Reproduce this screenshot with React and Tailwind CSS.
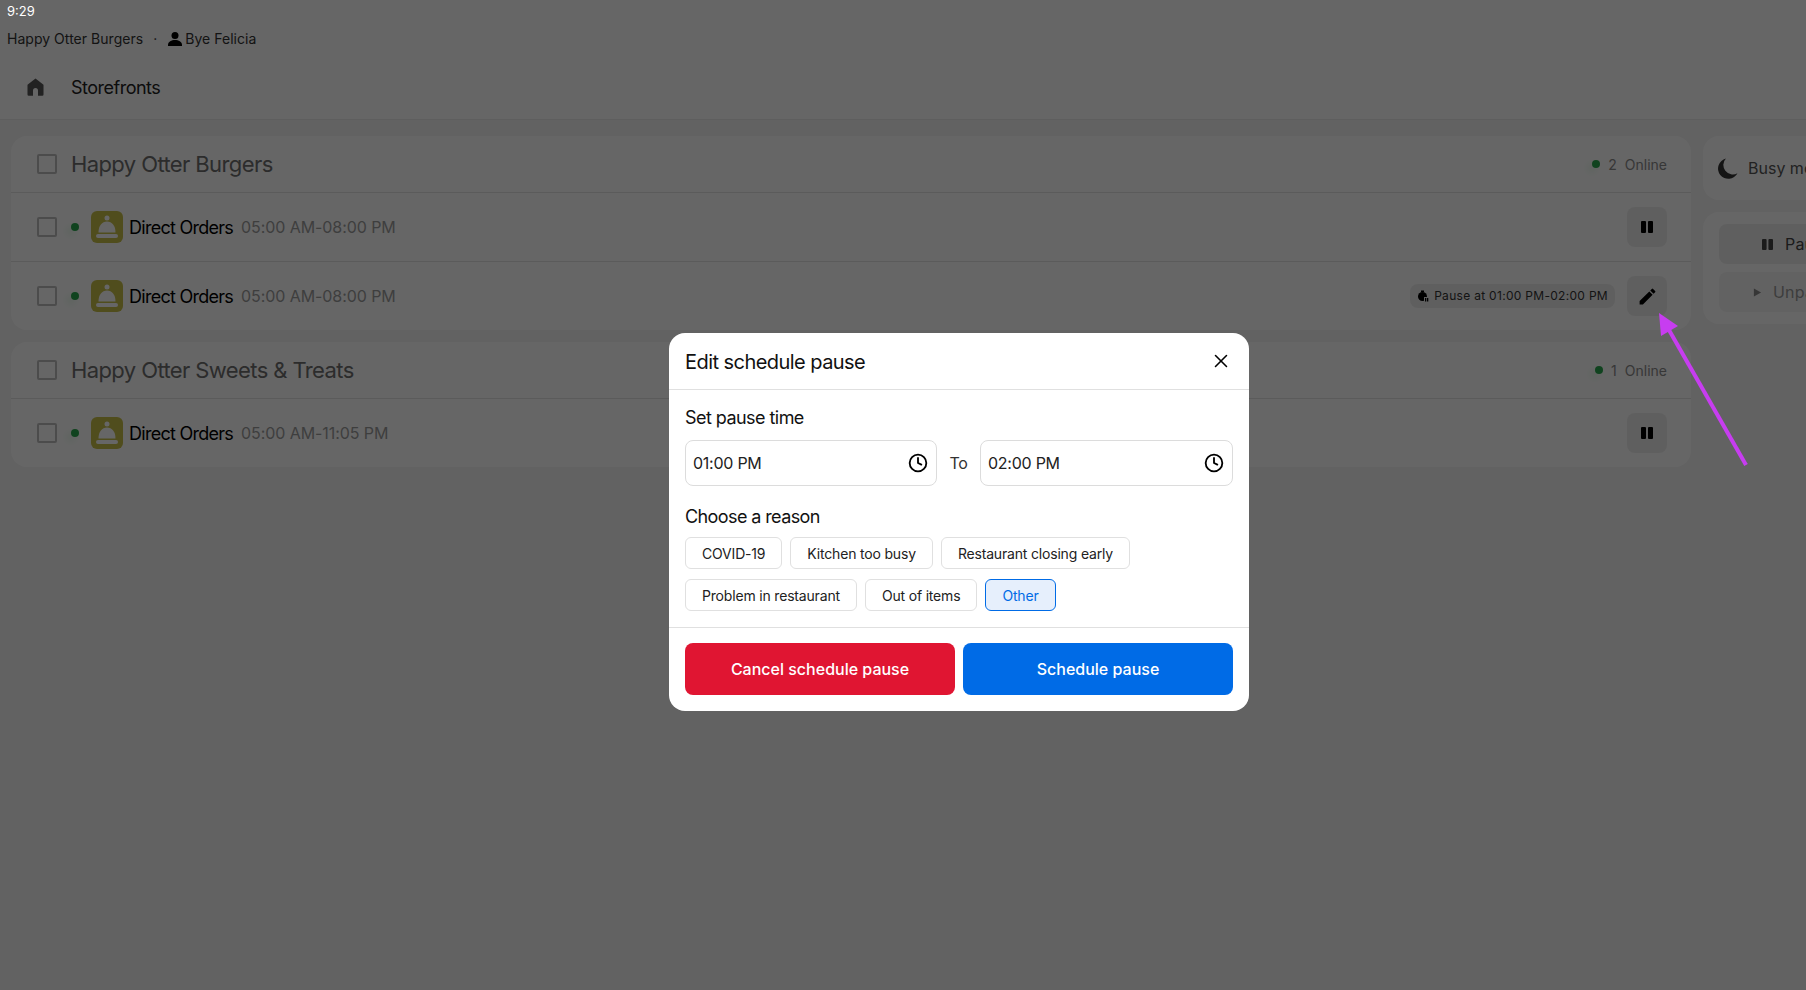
import React from "react";
import { X, Clock } from "lucide-react";

function Check() {
  return <span className="block size-5 shrink-0 rounded-[2px] border-2 border-[#bdbdbd] bg-white" />;
}

function Bell() {
  return (
    <span className="flex size-8 shrink-0 items-center justify-center rounded-md bg-[#c8c04a]">
      <svg viewBox="0 0 32 32" className="size-8">
        <circle cx="16" cy="7" r="2.500" fill="#fff" />
        <path d="M7.500 21.500C7.500 14.500 11 10.500 16 10.500s8.500 4 8.500 11z" fill="#fff" />
        <rect x="5" y="23" width="22" height="4" rx="2" fill="#fff" />
      </svg>
    </span>
  );
}

function Dot() {
  return <span className="block size-2 shrink-0 rounded-full bg-[#2aa84e] shadow-[-4px_4px_6px_rgba(47,200,92,0.12)]" />;
}

function PauseIcon({ className }) {
  return (
    <svg viewBox="0 0 12 12" className={className} fill="currentColor">
      <rect x="0" y="0" width="5" height="12" rx="1" />
      <rect x="7" y="0" width="5" height="12" rx="1" />
    </svg>
  );
}

function SquareBtn({ children }) {
  return (
    <span className="flex size-10 items-center justify-center rounded-lg bg-[#eeeeee] text-black">{children}</span>
  );
}

function Row({ time, children, border }) {
  return (
    <div className={`flex items-center pl-[26px] pr-6 ${border ? "h-[69px] border-b border-[#e3e3e3]" : "h-[68px]"}`}>
      <Check />
      <span className="ml-[14px]"><Dot /></span>
      <span className="ml-3"><Bell /></span>
      <span className="ml-1.5 pt-px text-[18px] tracking-[-0.73px] text-black">Direct Orders</span>
      <span className="ml-2 text-[16px] tracking-[-0.08px] text-[#9c9c9c]">{time}</span>
      <div className="ml-auto flex items-center gap-[12px]">{children}</div>
    </div>
  );
}

function CardHead({ title, count }) {
  return (
    <div className="flex h-[57px] items-center border-b border-[#e3e3e3] pl-[26px] pr-6">
      <Check />
      <span className="ml-[14px] pt-px text-[22px] tracking-[-0.6px] text-[#6e6e6e]">{title}</span>
      <span className="ml-auto flex items-center text-[14px] text-[#8a8a8a]">
        <Dot />
        <span className="ml-2">{count}</span>
        <span className="ml-2">Online</span>
      </span>
    </div>
  );
}

function Chip({ children, active }) {
  return (
    <span
      className={`flex h-8 items-center rounded-md border px-4 text-[14px] tracking-[-0.18px] ${
        active ? "border-[#006be6] bg-[#e6effc] text-[#006be6]" : "border-[#e0e0e0] bg-white text-[#222]"
      }`}
    >
      {children}
    </span>
  );
}

function TimeInput({ value, className }) {
  return (
    <div className={`flex h-[46px] items-center justify-between rounded-lg border border-[#dcdcdc] pl-[7px] pr-2 ${className}`}>
      <span className="text-[16px] tracking-[-0.25px] text-[#222]">{value}</span>
      <Clock className="size-5 text-black" strokeWidth={2.2} />
    </div>
  );
}

export default function App() {
  return (
    <div className="relative h-[990px] w-[1806px] overflow-hidden bg-[#f6f6f6] font-['Inter',sans-serif]">
      <div className="bg-white">
        <div className="relative z-10 flex h-[24px] items-center pl-[7px] text-[13px] text-white">9:29</div>
        <div className="flex h-[30px] items-center pb-[1px] pl-[7px] text-[14px] tracking-[0.03px] text-[#333]">
          <span>Happy Otter Burgers</span>
          <span className="mx-[10px]">·</span>
          <svg viewBox="0 0 16 16" className="size-4 text-black" fill="currentColor">
            <circle cx="8" cy="4.5" r="3.5" />
            <path d="M1 14c0-3.2 3.5-5 7-5s7 1.800 7 5v1H1z" />
          </svg>
          <span className="ml-[2px]">Bye Felicia</span>
        </div>
        <div className="flex h-[66px] items-center border-b border-[#ececec] pl-[27px]">
          <svg viewBox="0 0 17 18" className="h-[18px] w-[17px] text-[#555]" fill="currentColor">
            <path d="M8.500 0.500L16.500 6.800V16.500a1.200 1.200 0 0 1-1.200 1.200H11V12.500a2.500 2.500 0 0 0-5 0v5.200H1.700a1.200 1.200 0 0 1-1.200-1.200V6.800z" />
          </svg>
          <span className="ml-[27px] pt-px text-[18px] tracking-[-0.5px] text-[#222]">Storefronts</span>
        </div>
      </div>

      <div className="flex gap-3 pl-[11px] pt-4">
        <div className="flex w-[1680px] shrink-0 flex-col gap-3">
          <div className="rounded-2xl bg-white">
            <CardHead title="Happy Otter Burgers" count="2" />
            <Row time="05:00 AM-08:00 PM" border>
              <SquareBtn><PauseIcon className="size-3" /></SquareBtn>
            </Row>
            <Row time="05:00 AM-08:00 PM">
              <span className="flex h-6 items-center gap-[5px] rounded-lg bg-[#eeeeee] px-[7px] text-[12px] tracking-[0.3px] text-[#333]">
                <svg viewBox="0 0 12 12" className="size-3 text-black" fill="currentColor">
                  <circle cx="5.500" cy="6.500" r="4.500" />
                  <rect x="4" y="0.500" width="3" height="1.500" />
                  <rect x="7" y="7" width="5" height="5" fill="#eee" />
                  <rect x="8" y="8" width="1.300" height="3.500" />
                  <rect x="10" y="8" width="1.300" height="3.500" />
                </svg>
                Pause at 01:00 PM-02:00 PM
              </span>
              <SquareBtn>
                <svg viewBox="0 0 24 24" className="size-[21px]" fill="currentColor">
                  <path d="M3 17.250V21h3.750L17.810 9.940l-3.750-3.750L3 17.250zM20.710 7.040a1 1 0 0 0 0-1.410l-2.340-2.340a1 1 0 0 0-1.410 0l-1.830 1.830 3.750 3.750 1.830-1.830z" />
                </svg>
              </SquareBtn>
            </Row>
          </div>
          <div className="rounded-2xl bg-white">
            <CardHead title="Happy Otter Sweets & Treats" count="1" />
            <Row time="05:00 AM-11:05 PM">
              <SquareBtn><PauseIcon className="size-3" /></SquareBtn>
            </Row>
          </div>
        </div>

        <div className="flex w-[260px] shrink-0 flex-col gap-3">
          <div className="flex h-[64px] items-center rounded-2xl bg-white pl-[14px]">
            <svg viewBox="0 0 20 20" className="size-[21px] text-[#333]" fill="currentColor">
              <path d="M8.500 0.500A9.800 9.800 0 1 0 19.500 14.500A9 9 0 0 1 8.500 0.500z" />
            </svg>
            <span className="ml-[10px] text-[16px] text-[#555]">Busy mode</span>
          </div>
          <div className="flex h-[112px] flex-col gap-2 rounded-2xl bg-white px-4 py-3">
            <div className="flex h-10 items-center rounded-lg bg-[#eeeeee] pl-[43px] text-[16px] tracking-[0.2px] text-[#444]">
              <PauseIcon className="size-[11px] text-[#444]" />
              <span className="ml-3">Pause all</span>
            </div>
            <div className="flex h-10 items-center rounded-lg bg-[#f5f5f5] pl-[34px] text-[16px] tracking-[0.2px] text-[#999]">
              <svg viewBox="0 0 10 10" className="size-[9px] text-[#888]" fill="currentColor"><path d="M1 0.500L9 5L1 9.500z" /></svg>
              <span className="ml-[11px]">Unpause all</span>
            </div>
          </div>
        </div>
      </div>

      <div className="absolute inset-0 bg-black/60" />

      <svg viewBox="0 0 1806 990" className="absolute inset-0 h-[990px] w-[1806px]">
        <line x1="1746" y1="465" x2="1669" y2="330" stroke="#c73df0" strokeWidth="4" />
        <path d="M1659 313L1678 326L1661 336z" fill="#c73df0" />
      </svg>

      <div className="absolute left-[669px] top-[333px] h-[378px] w-[580px] rounded-2xl bg-white">
        <div className="flex h-[57px] items-center justify-between border-b border-[#e0e0e0] pl-4 pr-[17px]">
          <span className="pt-px text-[20px] tracking-[-0.55px] text-[#111]">Edit schedule pause</span>
          <X className="size-[22px] text-black" strokeWidth={1.7} />
        </div>
        <div className="h-[238px] border-b border-[#e0e0e0] px-4">
          <div className="flex h-[42px] items-end pb-[2px] text-[18px] leading-6 tracking-[-0.55px] text-[#111]">Set pause time</div>
          <div className="mt-2 flex items-center">
            <TimeInput value="01:00 PM" className="w-[252px]" />
            <span className="w-[43px] text-center text-[16px] tracking-[-0.25px] text-[#333]">To</span>
            <TimeInput value="02:00 PM" className="w-[253px]" />
          </div>
          <div className="mt-[19px] text-[18px] leading-6 tracking-[-0.6px] text-[#111]">Choose a reason</div>
          <div className="mt-[8px] flex flex-wrap gap-x-2 gap-y-[10px]">
            <Chip>COVID-19</Chip>
            <Chip>Kitchen too busy</Chip>
            <Chip>Restaurant closing early</Chip>
            <Chip>Problem in restaurant</Chip>
            <Chip>Out of items</Chip>
            <Chip active>Other</Chip>
          </div>
        </div>
        <div className="flex gap-2 px-4 pt-[15px]">
          <span className="flex h-[52px] flex-1 items-center justify-center rounded-lg bg-[#e01532] text-[16px] font-medium text-white">Cancel schedule pause</span>
          <span className="flex h-[52px] flex-1 items-center justify-center rounded-lg bg-[#006be6] text-[16px] font-medium text-white">Schedule pause</span>
        </div>
      </div>
    </div>
  );
}
